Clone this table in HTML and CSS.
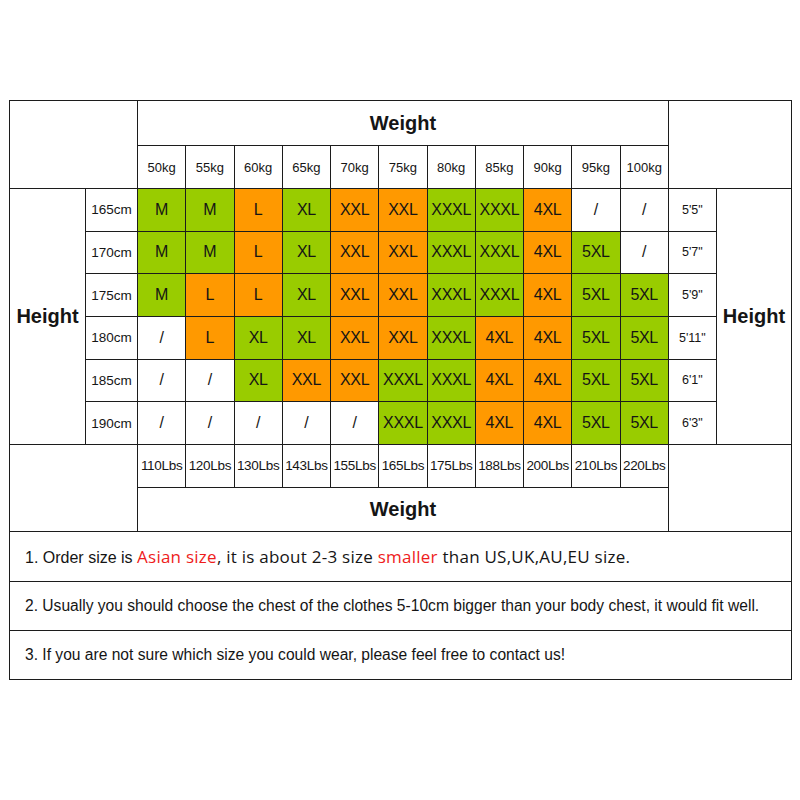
FILE: index.html
```html
<!DOCTYPE html>
<html>
<head>
<meta charset="utf-8">
<link rel="stylesheet" href="styles.css">
</head>
<body>
<div class="page">
<table class="chart">
<colgroup>
<col class="c-h"><col class="c-cm">
<col class="c-w"><col class="c-w"><col class="c-w"><col class="c-w"><col class="c-w"><col class="c-w"><col class="c-w"><col class="c-w"><col class="c-w"><col class="c-w"><col class="c-w">
<col class="c-ft"><col class="c-h2">
</colgroup>
<tr class="r-title">
<td colspan="2" rowspan="2"></td>
<td colspan="11" class="big">Weight</td>
<td colspan="2" rowspan="2"></td>
</tr>
<tr class="r-kg">
<td class="kg">50kg</td><td class="kg">55kg</td><td class="kg">60kg</td><td class="kg">65kg</td><td class="kg">70kg</td><td class="kg">75kg</td><td class="kg">80kg</td><td class="kg">85kg</td><td class="kg">90kg</td><td class="kg">95kg</td><td class="kg">100kg</td>
</tr>
<tr class="r-size">
<td rowspan="6" class="big">Height</td>
<td class="cm">165cm</td>
<td class="sz g">M</td><td class="sz g">M</td><td class="sz o">L</td><td class="sz g">XL</td><td class="sz o">XXL</td><td class="sz o">XXL</td><td class="sz g">XXXL</td><td class="sz g">XXXL</td><td class="sz o">4XL</td><td class="sz">/</td><td class="sz">/</td>
<td class="ft">5'5"</td>
<td rowspan="6" class="big">Height</td>
</tr>
<tr class="r-size">
<td class="cm">170cm</td>
<td class="sz g">M</td><td class="sz g">M</td><td class="sz o">L</td><td class="sz g">XL</td><td class="sz o">XXL</td><td class="sz o">XXL</td><td class="sz g">XXXL</td><td class="sz g">XXXL</td><td class="sz o">4XL</td><td class="sz g">5XL</td><td class="sz">/</td>
<td class="ft">5'7"</td>
</tr>
<tr class="r-size">
<td class="cm">175cm</td>
<td class="sz g">M</td><td class="sz o">L</td><td class="sz o">L</td><td class="sz g">XL</td><td class="sz o">XXL</td><td class="sz o">XXL</td><td class="sz g">XXXL</td><td class="sz g">XXXL</td><td class="sz o">4XL</td><td class="sz g">5XL</td><td class="sz g">5XL</td>
<td class="ft">5'9"</td>
</tr>
<tr class="r-size">
<td class="cm">180cm</td>
<td class="sz">/</td><td class="sz o">L</td><td class="sz g">XL</td><td class="sz g">XL</td><td class="sz o">XXL</td><td class="sz o">XXL</td><td class="sz g">XXXL</td><td class="sz o">4XL</td><td class="sz o">4XL</td><td class="sz g">5XL</td><td class="sz g">5XL</td>
<td class="ft">5'11"</td>
</tr>
<tr class="r-size">
<td class="cm">185cm</td>
<td class="sz">/</td><td class="sz">/</td><td class="sz g">XL</td><td class="sz o">XXL</td><td class="sz o">XXL</td><td class="sz g">XXXL</td><td class="sz g">XXXL</td><td class="sz o">4XL</td><td class="sz o">4XL</td><td class="sz g">5XL</td><td class="sz g">5XL</td>
<td class="ft">6'1"</td>
</tr>
<tr class="r-size">
<td class="cm">190cm</td>
<td class="sz">/</td><td class="sz">/</td><td class="sz">/</td><td class="sz">/</td><td class="sz">/</td><td class="sz g">XXXL</td><td class="sz g">XXXL</td><td class="sz o">4XL</td><td class="sz o">4XL</td><td class="sz g">5XL</td><td class="sz g">5XL</td>
<td class="ft">6'3"</td>
</tr>
<tr class="r-lbs">
<td colspan="2" rowspan="2"></td>
<td class="lbs">110Lbs</td><td class="lbs">120Lbs</td><td class="lbs">130Lbs</td><td class="lbs">143Lbs</td><td class="lbs">155Lbs</td><td class="lbs">165Lbs</td><td class="lbs">175Lbs</td><td class="lbs">188Lbs</td><td class="lbs">200Lbs</td><td class="lbs">210Lbs</td><td class="lbs">220Lbs</td>
<td colspan="2" rowspan="2"></td>
</tr>
<tr class="r-weight">
<td colspan="11" class="big">Weight</td>
</tr>
<tr class="r-note1">
<td colspan="15" class="note note1"><span class="n-a">1. Order size is </span><span class="n-b red">Asian size</span><span class="n-b">, it is about 2-3 size </span><span class="n-b red">smaller</span><span class="n-b"> than US,UK,AU,EU size.</span></td>
</tr>
<tr class="r-note">
<td colspan="15" class="note">2. Usually you should choose the chest of the clothes 5-10cm bigger than your body chest, it would fit well.</td>
</tr>
<tr class="r-note">
<td colspan="15" class="note">3. If you are not sure which size you could wear, please feel free to contact us!</td>
</tr>
</table>
</div>
</body>
</html>
```

FILE: styles.css
```css
html, body {
  margin: 0;
  padding: 0;
  background: #ffffff;
}

.page {
  padding: 100px 9px 0 9px;
}

.chart {
  border-collapse: collapse;
  table-layout: fixed;
  width: 782px;
  font-family: "Liberation Sans", Arial, sans-serif;
  color: #151515;
}

.c-h { width: 76px; }
.c-cm { width: 52px; }
.c-w { width: 48.25px; }
.c-ft { width: 48px; }
.c-h2 { width: 75.25px; }

.chart td {
  border: 1px solid #1c1c1c;
  padding: 0;
  text-align: center;
  vertical-align: middle;
  white-space: nowrap;
  overflow: hidden;
}

.r-title { height: 45px; }
.r-kg { height: 43px; }
.r-size { height: 42.67px; }
.r-lbs { height: 43px; }
.r-weight { height: 44px; }
.r-note1 { height: 50px; }
.r-note { height: 49px; }

.big {
  font-weight: bold;
  font-size: 20px;
}

.kg {
  font-size: 13px;
}

.cm {
  font-size: 13.5px;
}

.ft {
  font-size: 12.5px;
}

.lbs {
  font-size: 13.5px;
  letter-spacing: -0.3px;
}

.sz {
  font-size: 16px;
  letter-spacing: -0.3px;
}

.g { background: #99cc00; }
.o { background: #ff9900; }

.note {
  text-align: left !important;
  padding-left: 15px !important;
  font-size: 15.6px;
}

.note1 .n-a {
  font-size: 16px;
}

.note1 .n-b {
  font-family: "Open Sans", "Noto Sans", sans-serif;
  font-size: 17px;
  letter-spacing: 0.25px;
}

.red {
  color: #ee1c1c;
}
```
